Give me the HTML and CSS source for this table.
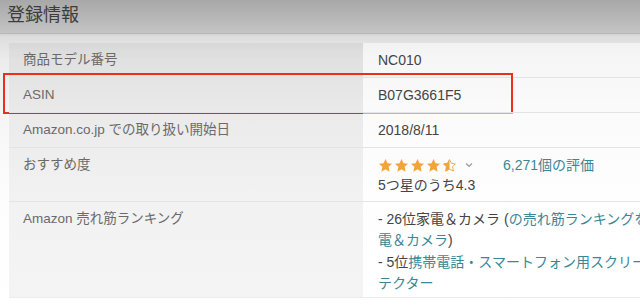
FILE: index.html
```html
<!DOCTYPE html>
<html lang="ja">
<head>
<meta charset="utf-8">
<link rel="stylesheet" href="styles.css">
</head>
<body>
<div class="page">
  <div class="header">登録情報</div>
  <div class="spec">
    <div class="row">
      <div class="label">商品モデル番号</div>
      <div class="value">NC010</div>
    </div>
    <div class="row highlighted">
      <div class="label">ASIN</div>
      <div class="value">B07G3661F5</div>
      <div class="redbox"></div>
    </div>
    <div class="row">
      <div class="label">Amazon.co.jp での取り扱い開始日</div>
      <div class="value">2018/8/11</div>
    </div>
    <div class="row">
      <div class="label">おすすめ度</div>
      <div class="value rating">
        <div class="rating-line">
          <span class="stars">
            <svg viewBox="0 0 16 16" class="star"><polygon points="8,1 10.1,5.6 15,6.1 11.3,9.4 12.4,14.6 8,12 3.6,14.6 4.7,9.4 1,6.1 5.9,5.6"/></svg>
            <svg viewBox="0 0 16 16" class="star"><polygon points="8,1 10.1,5.6 15,6.1 11.3,9.4 12.4,14.6 8,12 3.6,14.6 4.7,9.4 1,6.1 5.9,5.6"/></svg>
            <svg viewBox="0 0 16 16" class="star"><polygon points="8,1 10.1,5.6 15,6.1 11.3,9.4 12.4,14.6 8,12 3.6,14.6 4.7,9.4 1,6.1 5.9,5.6"/></svg>
            <svg viewBox="0 0 16 16" class="star"><polygon points="8,1 10.1,5.6 15,6.1 11.3,9.4 12.4,14.6 8,12 3.6,14.6 4.7,9.4 1,6.1 5.9,5.6"/></svg>
            <svg viewBox="0 0 16 16" class="star half"><polygon class="outline" points="8,1.8 10.1,5.6 14.2,6.3 11.3,9.4 12.2,13.9 8,11.8 3.8,13.9 4.7,9.4 1.8,6.3 5.9,5.6"/><polygon class="fill" points="8,1 8,12 3.6,14.6 4.7,9.4 1,6.1 5.9,5.6"/></svg>
          </span>
          <svg viewBox="0 0 10 10" class="chev"><polyline points="2,3.5 5,6.5 8,3.5"/></svg>
          <span class="link count">6,271個の評価</span>
        </div>
        <div>5つ星のうち4.3</div>
      </div>
    </div>
    <div class="row last">
      <div class="label">Amazon 売れ筋ランキング</div>
      <div class="value ranking">
        <div>- 26位家電＆カメラ (<span class="link">の売れ筋ランキングを見る家<br>電＆カメラ</span>)</div>
        <div>- 5位<span class="link">携帯電話・スマートフォン用スクリーンプロ<br>テクター</span></div>
      </div>
    </div>
  </div>
</div>
</body>
</html>
```
FILE: styles.css
```css
html, body {
  margin: 0;
  padding: 0;
}
body {
  width: 640px;
  height: 308px;
  overflow: hidden;
  font-family: "Liberation Sans", "Noto Sans CJK JP", sans-serif;
  background: linear-gradient(#dcdcdc 34px, #ececec 60px, #f6f6f6 120px, #fdfdfd 200px, #ffffff 308px);
}
.page {
  width: 760px;
}
.header {
  height: 33px;
  line-height: 31px;
  padding-left: 7px;
  font-size: 18px;
  color: #3c3c3c;
  background: linear-gradient(#a8a8a8, #c4c4c4);
  border-bottom: 1px solid #b8b8b8;
  box-shadow: 0 1px 2px rgba(0,0,0,0.06);
}
.spec {
  margin: 9px 0 0 9px;
  width: 740px;
}
.row {
  display: grid;
  grid-template-columns: 354px 1fr;
  border-top: 1px solid #e4e4e4;
  position: relative;
}
.row:first-child {
  border-top: none;
}
.row.last {
  border-bottom: 1px solid #ececec;
}
.label {
  background: rgba(0,0,0,0.045);
  padding: 8px 14px;
  font-size: 13.5px;
  line-height: 18px;
  color: #6a6a6a;
}
.value {
  background: rgba(255,255,255,0.55);
  padding: 8px 15px;
  font-size: 14px;
  line-height: 18px;
  color: #444;
}
.rating {
  line-height: 20px;
  padding-top: 7px;
  padding-bottom: 6px;
}
.rating-line {
  display: flex;
  align-items: center;
}
.stars {
  display: flex;
  gap: 1px;
}
.star {
  width: 15px;
  height: 15px;
  fill: #f2a33a;
}
.star.half .outline {
  fill: none;
  stroke: #f2a33a;
  stroke-width: 1;
}
.chev {
  width: 10px;
  height: 10px;
  margin-left: 7px;
  fill: none;
  stroke: #9a9a9a;
  stroke-width: 1.2;
}
.count {
  margin-left: 29px;
}
.link {
  color: #3a8796;
}
.ranking {
  line-height: 21.3px;
  padding-top: 7px;
  padding-bottom: 3px;
  white-space: nowrap;
}
.redbox {
  position: absolute;
  left: -6px;
  top: -5px;
  width: 506px;
  height: 37px;
  border: 2px solid #ef2d1c;
  pointer-events: none;
}
```
